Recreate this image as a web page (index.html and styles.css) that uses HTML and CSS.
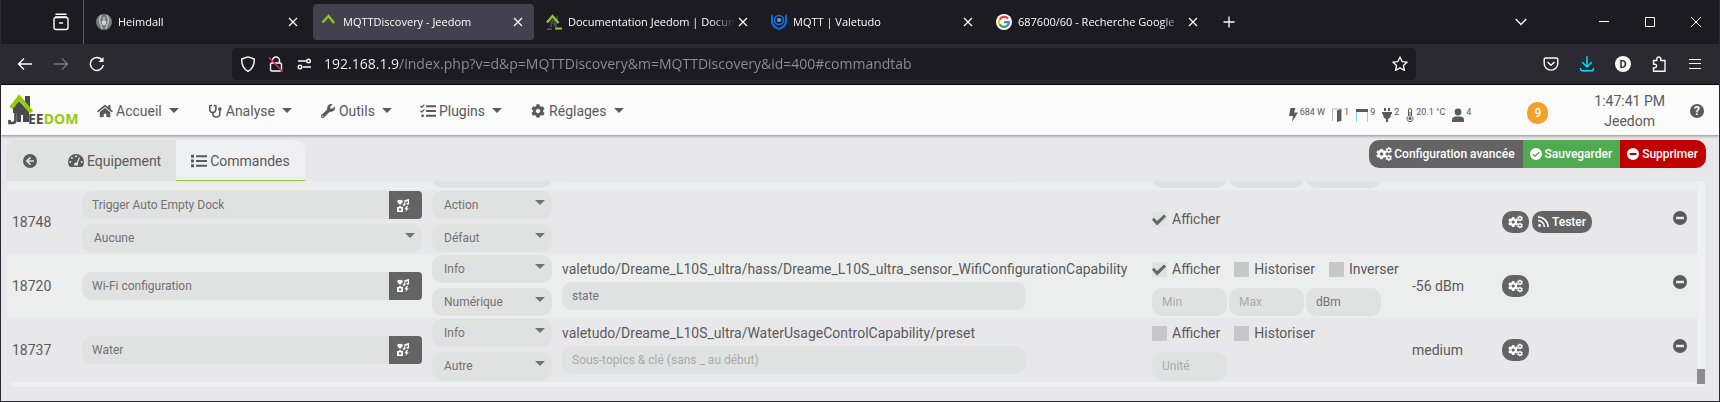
FILE: index.html
```html
<!DOCTYPE html>
<html lang="fr">
<head>
  <meta charset="utf-8">
  <title>MQTTDiscovery - Jeedom</title>
  <link rel="stylesheet" href="styles.css">
</head>
<body>
  <svg class="sprite" width="0" height="0" aria-hidden="true">
    <symbol id="close" viewBox="0 0 16 16"><path d="M4 4l8 8M12 4l-8 8" fill="none" stroke="currentColor" stroke-width="1.2"/></symbol>
    <symbol id="house" viewBox="0 0 576 512"><path d="M280.37 148.26L96 300.11V464a16 16 0 0 0 16 16l112.06-.29a16 16 0 0 0 15.92-16V368a16 16 0 0 1 16-16h64a16 16 0 0 1 16 16v95.64a16 16 0 0 0 16 16.05L464 480a16 16 0 0 0 16-16V300L295.67 148.26a12.19 12.19 0 0 0-15.3 0zM571.6 251.47L488 182.56V44.05a12 12 0 0 0-12-12h-56a12 12 0 0 0-12 12v72.61L318.47 43a48 48 0 0 0-61 0L4.34 251.47a12 12 0 0 0-1.6 16.9l25.5 31A12 12 0 0 0 45.15 301l235.22-193.74a12.19 12.19 0 0 1 15.3 0L530.9 301a12 12 0 0 0 16.9-1.6l25.5-31a12 12 0 0 0-1.7-16.93z"/></symbol>
    <symbol id="cog" viewBox="0 0 512 512"><path d="M487.4 315.7l-42.6-24.6c4.3-23.2 4.3-47 0-70.2l42.6-24.6c4.9-2.8 7.1-8.6 5.5-14-11.1-35.6-30-67.8-54.7-94.6-3.8-4.1-10-5.1-14.8-2.3L380.8 110c-17.9-15.4-38.5-27.3-60.8-35.1V25.8c0-5.6-3.9-10.5-9.4-11.7-36.7-8.2-74.3-7.8-109.2 0-5.5 1.2-9.4 6.1-9.4 11.7V75c-22.2 7.9-42.8 19.8-60.8 35.1L88.7 85.5c-4.9-2.8-11-1.9-14.8 2.3-24.7 26.7-43.6 58.9-54.7 94.6-1.7 5.4.6 11.2 5.5 14L67.3 221c-4.3 23.2-4.3 47 0 70.2l-42.6 24.6c-4.9 2.8-7.1 8.6-5.5 14 11.1 35.6 30 67.8 54.7 94.6 3.8 4.1 10 5.1 14.8 2.3l42.6-24.6c17.9 15.4 38.5 27.3 60.8 35.1v49.2c0 5.6 3.9 10.5 9.4 11.7 36.7 8.2 74.3 7.8 109.2 0 5.5-1.2 9.4-6.1 9.4-11.7v-49.2c22.2-7.9 42.8-19.8 60.8-35.1l42.6 24.6c4.9 2.8 11 1.9 14.8-2.3 24.7-26.7 43.6-58.9 54.7-94.6 1.5-5.5-.7-11.3-5.6-14.1zM256 336c-44.1 0-80-35.9-80-80s35.9-80 80-80 80 35.9 80 80-35.9 80-80 80z"/></symbol>
    <symbol id="cogs" viewBox="0 0 16 14">
      <use href="#cog" x="0" y="1.5" width="11" height="11"/>
      <use href="#cog" x="9.5" y="0" width="6.5" height="6.5"/>
      <use href="#cog" x="9.5" y="7.5" width="6.5" height="6.5"/>
    </symbol>
    <symbol id="wrench" viewBox="0 0 512 512"><path d="M507.73 109.1c-2.24-9.03-13.54-12.09-20.12-5.51l-74.36 74.36-67.88-11.31-11.31-67.88 74.36-74.36c6.62-6.62 3.43-17.9-5.66-20.16-47.38-11.74-99.55.91-136.58 37.93-39.64 39.64-50.55 97.1-34.05 147.2L18.74 402.76c-24.99 24.99-24.99 65.51 0 90.5 24.99 24.99 65.51 24.99 90.5 0l213.21-213.21c50.12 16.71 107.47 5.68 147.37-34.22 37.07-37.07 49.7-89.32 37.91-136.73zM64 472c-13.25 0-24-10.75-24-24 0-13.26 10.75-24 24-24s24 10.74 24 24c0 13.25-10.75 24-24 24z"/></symbol>
    <symbol id="stethoscope" viewBox="0 0 16 16"><g fill="none" stroke="currentColor" stroke-width="1.8" stroke-linecap="round"><path d="M3.8 1.8L2 2.2V6a3.5 3.8 0 0 0 7 0V2.2L7.2 1.8M5.5 10v1.5a4 3.4 0 0 0 8 0V7.5"/><circle cx="13.5" cy="5.7" r="1.2"/></g></symbol>
    <symbol id="tasks" viewBox="0 0 16 14"><path d="M6 1.2h10v2H6zM6 6h10v2H6zM6 10.8h10v2H6z"/><path d="M.5 2l1.4 1.3L4.4.6M.5 6.8l1.4 1.3 2.5-2.7" fill="none" stroke="currentColor" stroke-width="1.3"/><circle cx="2.6" cy="11.8" r="1.4"/></symbol>
    <symbol id="list" viewBox="0 0 16 14"><path d="M0 .7h3v3H0zM0 5.5h3v3H0zM0 10.3h3v3H0zM5 1.2h11v2H5zM5 6h11v2H5zM5 10.8h11v2H5z"/></symbol>
    <symbol id="gauge" viewBox="0 0 16 14"><path fill-rule="evenodd" d="M8 0a8 8 0 0 0-6.9 12c.3.6.6 1 1.3 1h11.2c.7 0 1-.4 1.3-1A8 8 0 0 0 8 0zM8 1.2a1 1 0 1 1 0 2 1 1 0 0 1 0-2zM3.9 3a1 1 0 1 1 0 2 1 1 0 0 1 0-2zM2.3 7a1 1 0 1 1 0 2 1 1 0 0 1 0-2zM13.7 7a1 1 0 1 1 0 2 1 1 0 0 1 0-2zM10.9 3.2l1.1.4-2.2 5.6a2 2 0 0 1 0 2.3H6.2a2 2 0 0 1 2.4-2.8z"/></symbol>
    <symbol id="back" viewBox="0 0 14 14"><circle cx="7" cy="7" r="7"/><path d="M7.5 3.3L3.8 7l3.7 3.7M4 7h7" fill="none" stroke="#e0e2e1" stroke-width="1.7"/></symbol>
    <symbol id="minus" viewBox="0 0 14 14"><path fill-rule="evenodd" d="M7 0a7 7 0 1 1 0 14A7 7 0 0 1 7 0zM3 5.7v2.6h8V5.7z"/></symbol>
    <symbol id="ok" viewBox="0 0 14 14"><circle cx="7" cy="7" r="7"/><path d="M3.6 7.2L6 9.6l4.6-4.7" fill="none" stroke="#50aa50" stroke-width="1.8"/></symbol>
    <symbol id="icons" viewBox="0 0 12 13"><path d="M3 6L.5 3.3C-.6 1.7 1.5-.3 3 1.2 4.5-.3 6.6 1.7 5.5 3.3zM7.3 1.2L12 0v4.5a1.3 1.1 0 1 1-1-1V2L8.300 2.700v3a1.300 1.100 0 1 1-1-1zM1.800 8l.5-.9h1.600l.5.900H6v5H0V8zM9.500 7L7.300 10.200h1.900L8.500 13l3.200-3.800H10L11 7z"/><circle cx="3" cy="10.400" r="1.200" fill="#646464"/></symbol>
    <symbol id="rss" viewBox="0 0 12 12"><circle cx="1.700" cy="10.300" r="1.600"/><path d="M0 5a7 7 0 0 1 7 7M0 1a11 11 0 0 1 11 11" fill="none" stroke="currentColor" stroke-width="1.700"/></symbol>
  </svg>

  <div class="browser">
    <header class="tabstrip">
      <button class="archive" aria-label="Onglets récents">
        <svg width="16" height="18" viewBox="0 0 16 18" fill="none" stroke="currentColor" stroke-width="1.4" stroke-linecap="round"><path d="M3 1.2h10M2.500 4h11"/><rect x="1" y="4.500" width="14" height="12" rx="2"/><path d="M6.500 10h3"/></svg>
      </button>
      <div class="tab first">
        <svg class="favicon" viewBox="0 0 16 16"><circle cx="8" cy="8" r="8" fill="#77797b"/><path d="M5 1Q2 7 5 11l1 4M11 1q3 6 0 10l-1 4M8 3v4" fill="none" stroke="#b9bbbc" stroke-width="1.5"/><path d="M5.500 7h5l-1 4h-3z" fill="#d0d1d2"/></svg>
        <button class="title">Heimdall</button>
        <button class="close" aria-label="Fermer Heimdall"><svg><use href="#close"/></svg></button>
      </div>
      <div class="tab active">
        <svg class="favicon" viewBox="0 0 16 16"><path d="M1.500 8.500L7.500 2l5.500 7" fill="none" stroke="#93cb06" stroke-width="2.3"/><path d="M3 11l3-3h2v3" fill="#3d3c4b"/></svg>
        <button class="title">MQTTDiscovery - Jeedom</button>
        <button class="close" aria-label="Fermer MQTTDiscovery"><svg><use href="#close"/></svg></button>
      </div>
      <div class="tab">
        <svg class="favicon" viewBox="0 0 16 16"><path d="M4 8l3-4 4 4v5H7.500v-3H6v3H4zM10.500 2H12v5h-1.500z" fill="#45444d"/><path d="M1 15.200h5M3 14v1" stroke="#56555e" stroke-width="1.5"/><path d="M1 8.500L6.500 2l6 7" fill="none" stroke="#93cb06" stroke-width="2.3"/><path d="M9 14.500h7" stroke="#93cb06" stroke-width="2"/></svg>
        <button class="title">Documentation Jeedom | Documentation</button>
        <button class="close" aria-label="Fermer Documentation"><svg><use href="#close"/></svg></button>
      </div>
      <div class="tab">
        <svg class="favicon" viewBox="0 0 16 16"><path d="M0 0l2 2v5q0 4 6 7 6-3 6-7V2l2-2v8q0 5-8 8-8-3-8-8z" fill="#0a6fe6"/><circle cx="8" cy="6" r="4.5" fill="none" stroke="#1676e2" stroke-width="1.5"/><circle cx="8" cy="6" r="2" fill="#5aa4ee"/></svg>
        <button class="title">MQTT | Valetudo</button>
        <button class="close" aria-label="Fermer Valetudo"><svg><use href="#close"/></svg></button>
      </div>
      <div class="tab">
        <svg class="favicon" viewBox="0 0 16 16"><circle cx="8" cy="8" r="8" fill="#fff"/><g fill="none" stroke-width="2.2"><path d="M12 4.700A5 5 0 0 0 3.600 5.800" stroke="#ea4335"/><path d="M3.600 5.700a5 5 0 0 0 0 4.600" stroke="#fbbc05"/><path d="M3.600 10.300a5 5 0 0 0 7.700 1.400" stroke="#34a853"/><path d="M11.200 11.800A5 5 0 0 0 13 8.200H8" stroke="#4285f4"/></g></svg>
        <button class="title">687600/60 - Recherche Google</button>
        <button class="close" aria-label="Fermer Google"><svg><use href="#close"/></svg></button>
      </div>
      <button class="newtab" aria-label="Nouvel onglet"><svg width="12" height="12" viewBox="0 0 12 12"><path d="M6 .5v11M.5 6h11" stroke="currentColor" stroke-width="1.3"/></svg></button>
      <div class="window-buttons">
        <button class="alltabs" aria-label="Lister les onglets"><svg width="12" height="8" viewBox="0 0 12 8"><path d="M.7 1L6 6.500 11.300 1" fill="none" stroke="currentColor" stroke-width="1.3"/></svg></button>
        <button aria-label="Réduire"><svg width="10" height="10" viewBox="0 0 10 10"><path d="M0 4.500h10" stroke="currentColor"/></svg></button>
        <button aria-label="Agrandir"><svg width="10" height="10" viewBox="0 0 10 10"><path d="M.5.5h9v9h-9z" fill="none" stroke="currentColor"/></svg></button>
        <button aria-label="Fermer"><svg width="10" height="10" viewBox="0 0 10 10"><path d="M0 0l10 10M10 0L0 10" stroke="currentColor"/></svg></button>
      </div>
    </header>

    <div class="toolbar">
      <div class="history">
        <button aria-label="Précédent"><svg width="16" height="16" viewBox="0 0 16 16" fill="none" stroke="currentColor" stroke-width="1.4"><path d="M15 8H1.500M7 2.500L1.500 8 7 13.500"/></svg></button>
        <button class="off" aria-label="Suivant"><svg width="16" height="16" viewBox="0 0 16 16" fill="none" stroke="currentColor" stroke-width="1.4"><path d="M1 8h13.500M9 2.500L14.500 8 9 13.500"/></svg></button>
        <button aria-label="Actualiser"><svg width="16" height="16" viewBox="0 0 16 16" fill="none" stroke="currentColor" stroke-width="1.5"><path d="M13.200 4.200A6.500 6.500 0 1 0 14.300 9"/><path d="M14.500 1v5h-5z" fill="currentColor" stroke="none"/></svg></button>
      </div>
      <div class="urlbar">
        <svg width="16" height="16" viewBox="0 0 16 16" fill="none" stroke="currentColor" stroke-width="1.4"><path d="M8 .8L14.300 3C14.500 9 12.500 13 8 15.300 3.500 13 1.500 9 1.700 3z" stroke-linejoin="round"/></svg>
        <svg width="16" height="16" viewBox="0 0 16 16" fill="none" stroke="currentColor" stroke-width="1.4"><path d="M4.500 7V4.500a3.500 3.500 0 0 1 7 0V7"/><rect x="2.500" y="7" width="11" height="8" rx="1.5"/><path d="M1 1.500l13.500 14" stroke="#e22850" stroke-width="1.6"/></svg>
        <svg width="16" height="16" viewBox="0 0 16 16" fill="none" stroke="currentColor" stroke-width="1.4"><path d="M2 5h8M7 11h8"/><circle cx="12.500" cy="5" r="1.8"/><circle cx="4" cy="11" r="1.8"/></svg>
        <input type="text" aria-label="Adresse" value="192.168.1.9/index.php?v=d&amp;p=MQTTDiscovery&amp;m=MQTTDiscovery&amp;id=400#commandtab">
        <button aria-label="Marquer cette page"><svg width="16" height="16" viewBox="0 0 16 16" fill="none" stroke="currentColor" stroke-width="1.3" stroke-linejoin="round"><path d="M8 .9l2.100 4.700 5.100.5-3.800 3.400 1.100 5L8 11.900l-4.500 2.600 1.100-5L.8 6.100l5.100-.5z"/></svg></button>
      </div>
      <div class="tools">
        <button aria-label="Pocket"><svg width="16" height="16" viewBox="0 0 16 16" fill="none" stroke="currentColor" stroke-width="1.4" stroke-linejoin="round"><path d="M2.500 2h11q1.300 0 1.300 1.300V7.500a6.800 6.600 0 0 1-13.600 0V3.300Q1.200 2 2.500 2z"/><path d="M4.500 6L8 9.300 11.500 6"/></svg></button>
        <button class="download" aria-label="Téléchargements"><svg width="16" height="16" viewBox="0 0 16 16" fill="none" stroke="currentColor" stroke-width="1.5" stroke-linecap="round"><path d="M8 .8v10M3.500 6.500L8 11l4.500-4.500M1.500 12.500q0 2.300 2 2.300h9q2 0 2-2.300"/></svg></button>
        <button aria-label="Compte D"><span class="account">D</span></button>
        <button aria-label="Extensions"><svg width="16" height="16" viewBox="0 0 16 16" fill="none" stroke="currentColor" stroke-width="1.4" stroke-linejoin="round"><path d="M2.500 4.500h3.300V3a2 2 0 0 1 4 0v1.500H14V15.200H2.500v-3.500h1.300a1.700 1.700 0 0 0 0-3.500H2.500z"/></svg></button>
        <button aria-label="Menu"><svg width="12" height="12" viewBox="0 0 12 12"><path d="M0 1.500h12M0 5.500h12M0 10.500h12" stroke="currentColor" stroke-width="1.2"/></svg></button>
      </div>
    </div>

    <div class="page">
      <nav class="navbar">
        <a class="logo" href="#" aria-label="Jeedom">
          <svg width="72" height="34" viewBox="0 0 72 34">
            <path d="M17 2h5v14l-5-5z" fill="#4a4a4c"/>
            <path d="M5 14l6-7 10 11v10H15v-7h-2v7H9v-9H5z" fill="#4a4a4c"/>
            <path d="M7.500 17v9q0 3-3 3H1.500v-3" fill="none" stroke="#4a4a4c" stroke-width="2.6"/>
            <path d="M3 14L11.200 3.500 23.500 18" fill="none" stroke="#93cb06" stroke-width="4"/>
            <text x="20" y="30"><tspan fill="#4a4a4c">EE</tspan><tspan fill="#93cb06">DOM</tspan></text>
          </svg>
        </a>
        <ul class="menu">
          <li><a href="#"><svg><use href="#house"/></svg>Accueil<b class="caret"></b></a></li>
          <li><a href="#"><svg><use href="#stethoscope"/></svg>Analyse<b class="caret"></b></a></li>
          <li><a href="#"><svg><use href="#wrench"/></svg>Outils<b class="caret"></b></a></li>
          <li><a href="#"><svg><use href="#tasks"/></svg>Plugins<b class="caret"></b></a></li>
          <li><a href="#"><svg><use href="#cog"/></svg>Réglages<b class="caret"></b></a></li>
        </ul>
        <div class="summary">
          <span><svg width="9" height="14" viewBox="0 0 9 14"><path d="M1.500 0h5L5 4.500h4L3 14l1-6H0z"/></svg>684 W</span>
          <span><svg width="10" height="14" viewBox="0 0 10 14"><path d="M.5 13V1h9v12" fill="none" stroke="#a9b4dc"/><path d="M5 2.500L9 1v12l-4 1z"/></svg>1</span>
          <span><svg width="12" height="14" viewBox="0 0 12 14"><path d="M.5 3v11M11.500 3v11" stroke="#8ed3d6"/><path d="M0 1h12v3H0z"/></svg>9</span>
          <span><svg width="10" height="14" viewBox="0 0 10 14"><path d="M2 0h2v3H2zM6 0h2v3H6zM0 4h10v2H9q0 4-3 5v3H4v-3Q1 10 1 6H0z"/></svg>2</span>
          <span><svg width="8" height="14" viewBox="0 0 8 14"><path d="M2.500 8V2a1.500 1.500 0 0 1 3 0v6a3 3 0 1 1-3 0zM4 4v6" fill="none" stroke="currentColor"/><circle cx="4" cy="10.500" r="1.5"/></svg>20.1 °C</span>
          <span><svg width="12" height="14" viewBox="0 0 12 14"><circle cx="6" cy="4" r="3.4"/><path d="M0 14v-2q0-3.500 4-3.500h4q4 0 4 3.500v2z"/></svg>4</span>
        </div>
        <span class="badge">9</span>
        <div class="clock"><time>1:47:41 PM</time><span>Jeedom</span></div>
        <a class="help" href="#" aria-label="Aide">?</a>
      </nav>

      <div class="head">
        <ul class="pagetabs">
          <li><a href="#" aria-label="Retour"><svg class="round"><use href="#back"/></svg></a></li>
          <li><a href="#"><svg><use href="#gauge"/></svg>Equipement</a></li>
          <li class="current"><a href="#"><svg><use href="#list"/></svg>Commandes</a></li>
        </ul>
        <div class="actions">
          <button class="config"><svg class="wide"><use href="#cogs"/></svg>Configuration avancée</button>
          <button class="save"><svg><use href="#ok"/></svg>Sauvegarder</button>
          <button class="remove"><svg><use href="#minus"/></svg>Supprimer</button>
        </div>
      </div>

      <main class="panel">
        <div class="scroll">
          <table>
            <colgroup><col class="c-id"><col class="c-name"><col class="c-type"><col class="c-topic"><col class="c-opt"><col class="c-state"><col class="c-act"><col class="c-del"></colgroup>
            <tbody>
              <tr class="cut">
                <td></td>
                <td></td>
                <td><span class="select"><select aria-label="Sous-type"><option>Numérique</option></select></span></td>
                <td><input class="field sub" type="text" aria-label="Sous-topic"></td>
                <td><div class="limits"><input class="field" type="text" aria-label="Min"><input class="field" type="text" aria-label="Max"><input class="field" type="text" aria-label="Unité"></div></td>
                <td></td><td></td><td></td>
              </tr>
              <tr>
                <td>18748</td>
                <td>
                  <div class="name"><input class="field" type="text" aria-label="Nom" value="Trigger Auto Empty Dock"><button aria-label="Icône"><svg><use href="#icons"/></svg></button></div>
                  <span class="select"><select aria-label="Commande liée"><option>Aucune</option></select></span>
                </td>
                <td>
                  <span class="select"><select aria-label="Type"><option>Action</option></select></span>
                  <span class="select"><select aria-label="Sous-type"><option>Défaut</option></select></span>
                </td>
                <td></td>
                <td><div class="checks"><label><input type="checkbox" checked>Afficher</label></div></td>
                <td></td>
                <td><div class="pills"><button aria-label="Configurer"><svg class="wide"><use href="#cogs"/></svg></button><button><svg><use href="#rss"/></svg>Tester</button></div></td>
                <td><button class="delete" aria-label="Supprimer la commande"><svg><use href="#minus"/></svg></button></td>
              </tr>
              <tr>
                <td>18720</td>
                <td>
                  <div class="name"><input class="field" type="text" aria-label="Nom" value="Wi-Fi configuration"><button aria-label="Icône"><svg><use href="#icons"/></svg></button></div>
                </td>
                <td>
                  <span class="select"><select aria-label="Type"><option>Info</option></select></span>
                  <span class="select"><select aria-label="Sous-type"><option>Numérique</option></select></span>
                </td>
                <td><div class="topic">valetudo/Dreame_L10S_ultra/hass/Dreame_L10S_ultra_sensor_WifiConfigurationCapability</div><input class="field sub" type="text" aria-label="Sous-topic" value="state"></td>
                <td>
                  <div class="checks"><label><input type="checkbox" checked>Afficher</label><label><input type="checkbox">Historiser</label><label><input type="checkbox">Inverser</label></div>
                  <div class="limits"><input class="field" type="text" aria-label="Min" placeholder="Min"><input class="field" type="text" aria-label="Max" placeholder="Max"><input class="field" type="text" aria-label="Unité" value="dBm"></div>
                </td>
                <td>-56 dBm</td>
                <td><div class="pills"><button aria-label="Configurer"><svg class="wide"><use href="#cogs"/></svg></button></div></td>
                <td><button class="delete" aria-label="Supprimer la commande"><svg><use href="#minus"/></svg></button></td>
              </tr>
              <tr>
                <td>18737</td>
                <td>
                  <div class="name"><input class="field" type="text" aria-label="Nom" value="Water"><button aria-label="Icône"><svg><use href="#icons"/></svg></button></div>
                </td>
                <td>
                  <span class="select"><select aria-label="Type"><option>Info</option></select></span>
                  <span class="select"><select aria-label="Sous-type"><option>Autre</option></select></span>
                </td>
                <td><div class="topic">valetudo/Dreame_L10S_ultra/WaterUsageControlCapability/preset</div><input class="field sub" type="text" aria-label="Sous-topic" placeholder="Sous-topics &amp; clé (sans _ au début)"></td>
                <td>
                  <div class="checks"><label><input type="checkbox">Afficher</label><label><input type="checkbox">Historiser</label></div>
                  <div class="limits"><input class="field" type="text" aria-label="Unité" placeholder="Unité"></div>
                </td>
                <td>medium</td>
                <td><div class="pills"><button aria-label="Configurer"><svg class="wide"><use href="#cogs"/></svg></button></div></td>
                <td><button class="delete" aria-label="Supprimer la commande"><svg><use href="#minus"/></svg></button></td>
              </tr>
            </tbody>
          </table>
        </div>
        <div class="scrollbar"><div class="thumb"></div></div>
      </main>
    </div>
  </div>
</body>
</html>
```
FILE: styles.css
```css
* {
  box-sizing: border-box;
}

html, body {
  height: 100%;
  margin: 0;
}

body {
  font: 14px/20px Roboto, sans-serif;
  color: #5a5a5a;
}

button, input, select {
  margin: 0;
  border: 0;
  outline: none;
  font: inherit;
  color: inherit;
  background: none;
}

button {
  display: flex;
  align-items: center;
  justify-content: center;
  padding: 0;
}

a {
  color: inherit;
  text-decoration: none;
}

ul {
  display: flex;
  margin: 0;
  padding: 0;
  list-style: none;
}

svg {
  flex: none;
  fill: currentColor;
}

svg[fill="none"] {
  fill: none;
}

.sprite {
  position: absolute;
}

/* browser window */

.browser {
  display: flex;
  flex-direction: column;
  height: 100%;
  border: 1px solid #2b2a33;
  border-top: 0;
  background: #1c1b22;
  color: #fbfbfe;
  font-family: "Open Sans", sans-serif;
}

.tabstrip {
  flex: none;
  display: flex;
  align-items: center;
  height: 44px;
  font-size: 11px;
}

.archive {
  width: 83px;
  height: 44px;
  padding-left: 38px;
  border-right: 1px solid #5b5a63;
}

.tab {
  flex: 0 1 221px;
  display: flex;
  align-items: center;
  min-width: 0;
  height: 36px;
  margin: 0 2px;
  padding: 0 8px;
  border-radius: 4px;
}

.tab.first {
  margin-left: 4px;
}

.tab.active {
  background: #42414d;
}

.favicon {
  width: 16px;
  height: 16px;
  margin-right: 6px;
}

.tab .title {
  flex: 1;
  justify-content: flex-start;
  overflow: hidden;
  white-space: nowrap;
  -webkit-mask-image: linear-gradient(to left, transparent, #000 24px);
  mask-image: linear-gradient(to left, transparent, #000 24px);
}

.tab .close svg {
  width: 16px;
  height: 16px;
}

.newtab {
  width: 36px;
  height: 36px;
}

.window-buttons {
  display: flex;
  margin-left: auto;
}

.window-buttons button {
  width: 46px;
  height: 44px;
}

.window-buttons .alltabs {
  margin-right: 37px;
}

.toolbar {
  flex: none;
  display: flex;
  align-items: center;
  height: 41px;
  border-bottom: 1px solid #0c0c0d;
  background: #2b2a33;
}

.history, .tools {
  display: flex;
}

.history {
  padding-left: 6px;
}

.history button, .tools button {
  width: 36px;
  height: 32px;
}

.history .off {
  color: #77767e;
}

.urlbar {
  flex: 1;
  display: flex;
  align-items: center;
  gap: 12px;
  height: 32px;
  margin: 0 117px;
  padding: 0 8px;
  border-radius: 4px;
  background: #1c1b22;
}

/* host part is brighter than the rest of the address */
.urlbar input {
  flex: 1;
  min-width: 0;
  padding: 0;
  font-size: 14px;
  color: transparent;
  background: linear-gradient(90deg, #fbfbfe 75px, #8f8f98 75px);
  -webkit-background-clip: text;
  background-clip: text;
}

.tools {
  padding-right: 6px;
}

.download {
  color: #00ddff;
}

.account {
  width: 16px;
  border-radius: 8px;
  background: #fbfbfe;
  color: #2b2a33;
  font: bold 10px/16px "Open Sans", sans-serif;
}

/* page */

.page {
  flex: 1;
  display: flex;
  flex-direction: column;
  min-height: 0;
  background: #e8e8ea;
  color: #5a5a5a;
  font-family: Roboto, sans-serif;
}

.navbar {
  flex: none;
  display: flex;
  align-items: center;
  height: 50px;
  padding: 1px 15px 0 7px;
  background: #fbfbfb;
  box-shadow: 0 1px 3px rgba(0, 0, 0, .4);
}

.logo {
  display: flex;
  margin-right: 17px;
}

.logo svg {
  overflow: visible;
}

.logo text {
  font: bold 14px "Open Sans", sans-serif;
}

.menu {
  gap: 28px;
}

.menu a {
  display: flex;
  align-items: center;
}

.menu svg {
  width: 16px;
  height: 14px;
  margin-right: 3px;
}

.caret {
  margin-left: 7px;
  border: 5px solid transparent;
  border-top-color: currentColor;
  border-bottom: 0;
}

.summary {
  display: flex;
  align-items: center;
  gap: 7px;
  margin: 6px 0 0 auto;
  font-size: 9px;
  line-height: 12px;
}

.summary span {
  display: flex;
  gap: 2px;
}

.summary svg {
  margin-top: 2px;
}

.badge {
  margin: 4px 46px 0 56px;
  width: 21px;
  border-radius: 10px;
  background: #f4a12c;
  color: #fff;
  font-weight: 500;
  font-size: 12px;
  line-height: 22px;
  text-align: center;
}

.clock {
  display: flex;
  flex-direction: column;
  align-items: center;
  margin-right: 25px;
}

.help {
  width: 14px;
  border-radius: 7px;
  background: #5a5a5a;
  color: #fbfbfb;
  font-weight: bold;
  font-size: 12px;
  line-height: 14px;
  text-align: center;
}

.head {
  flex: none;
  display: flex;
  align-items: flex-start;
  justify-content: space-between;
  padding: 5px 13px 0 6px;
}

.pagetabs {
  border-radius: 10px 10px 0 0;
  overflow: hidden;
  background: #e0e2e1;
}

.pagetabs a {
  display: flex;
  align-items: center;
  height: 41px;
  padding: 1px 15px 0;
}

.pagetabs svg {
  width: 16px;
  height: 14px;
  margin-right: 3px;
}

.pagetabs .round {
  width: 14px;
  margin: 0 1px;
}

.pagetabs .current {
  background: #eff0f2;
  box-shadow: inset 0 -1px #93cb3f;
}

.actions {
  display: flex;
  border-radius: 10px;
  overflow: hidden;
  color: #fff;
  font-weight: 500;
  font-size: 12px;
}

.actions button {
  height: 28px;
  padding: 0 8px 0 7px;
}

.actions svg {
  width: 12px;
  height: 12px;
  margin-right: 3px;
}

.actions .wide {
  width: 16px;
  height: 14px;
  margin-right: 2px;
}

.config {
  background: #646464;
}

.save {
  background: #50aa50;
}

.remove {
  background: #c00000;
}

.panel {
  flex: 1;
  display: flex;
  min-height: 0;
  margin: 0 14px 14px 6px;
  border-radius: 0 0 0 10px;
  overflow: hidden;
  background: #eff0f2;
}

/* scrolled down to its last rows */
.scroll {
  flex: 1;
  display: flex;
  flex-direction: column;
  justify-content: flex-end;
  overflow: hidden;
  padding-bottom: 5px;
}

.scrollbar {
  flex: none;
  display: flex;
  align-items: flex-end;
  width: 8px;
  padding-bottom: 3px;
}

.thumb {
  width: 8px;
  height: 15px;
  background: #8d8c96;
}

table {
  flex: none;
  width: 100%;
  border-collapse: collapse;
  table-layout: fixed;
}

.c-id { width: 70px; }
.c-name { width: 350px; }
.c-type { width: 130px; }
.c-opt { width: 260px; }
.c-state { width: 90px; }
.c-act { width: 120px; }
.c-del { width: 80px; }

tr {
  height: 64px;
  background: #e8e8ea;
}

tr:nth-child(odd) {
  background: #eceeed;
}

td {
  padding: 1px 5px 2px;
  vertical-align: middle;
  white-space: nowrap;
}

.cut td {
  vertical-align: bottom;
}

.field, .select select {
  height: 28px;
  border-radius: 10px;
  background: #e0e2e1;
  color: #727272;
  font-size: 12px;
}

.field {
  padding: 0 10px;
}

.field::placeholder {
  color: #a9abaa;
}

.select {
  display: grid;
}

.select + .select, .name + .select {
  margin-top: 5px;
}

.select::after {
  content: "";
  grid-area: 1 / 1;
  justify-self: end;
  margin: 9px 7px 0 0;
  width: 0;
  height: 0;
  border: 5px solid transparent;
  border-top-color: #727272;
  border-bottom: 0;
  pointer-events: none;
}

.select select {
  grid-area: 1 / 1;
  appearance: none;
  width: 100%;
  padding: 0 12px;
}

.name {
  display: flex;
}

.name .field {
  flex: 1;
  min-width: 0;
  border-radius: 10px 0 0 10px;
}

.name button {
  width: 33px;
  height: 28px;
  padding-right: 5px;
  border-radius: 0 4px 4px 0;
  background: #646464;
  color: #fff;
}

.name svg {
  width: 12px;
  height: 13px;
}

.topic {
  margin-bottom: 3px;
}

.sub {
  display: block;
  width: 80%;
  margin-bottom: 2px;
}

.cut .sub {
  margin-bottom: 6px;
}

.checks {
  display: flex;
  gap: 14px;
  margin-bottom: 5px;
}

.checks label {
  display: flex;
  align-items: center;
  gap: 5px;
  height: 28px;
}

.checks input {
  appearance: none;
  width: 15px;
  height: 15px;
  background: #c7c7c7;
}

.checks input:checked {
  background: #e0e2e1;
}

.checks input:checked::before {
  content: "";
  display: block;
  height: 15px;
  background: #666;
  clip-path: polygon(0 55%, 13% 42%, 34% 63%, 80% 20%, 94% 34%, 34% 93%);
}

.limits {
  display: flex;
  gap: 2px;
}

.limits .field {
  width: 75px;
}

.pills {
  display: flex;
  gap: 3px;
}

.pills button {
  height: 22px;
  padding: 0 6px;
  border-radius: 10px;
  background: #646464;
  color: #fff;
  font-weight: 500;
  font-size: 12px;
}

.pills svg {
  width: 11px;
  height: 11px;
  margin-right: 3px;
}

.pills .wide {
  width: 15px;
  height: 14px;
  margin-right: 0;
}

.delete {
  margin: 0 5px 7px auto;
}

.delete svg {
  width: 14px;
  height: 14px;
}
```
